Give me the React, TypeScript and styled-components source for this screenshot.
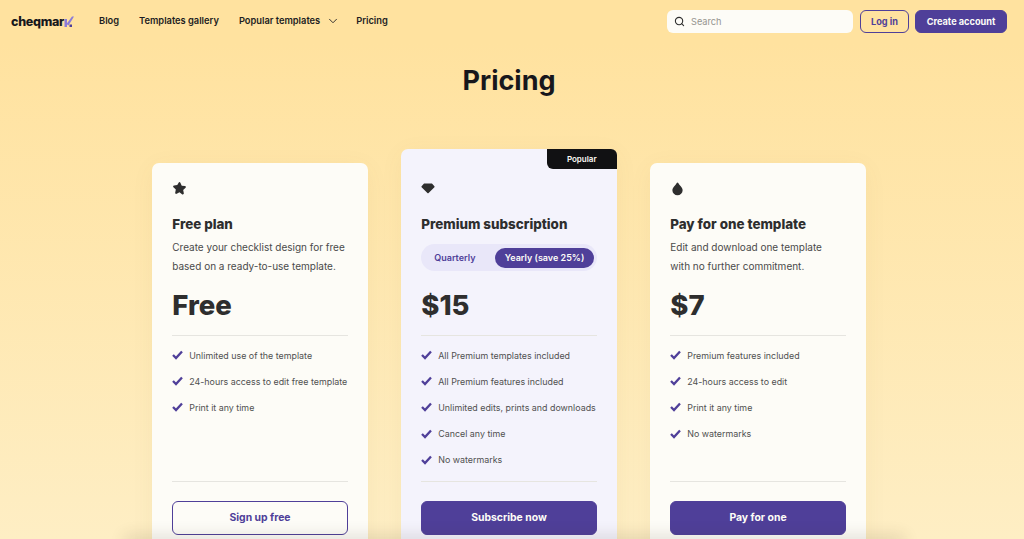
import React from "react";
import styled, { createGlobalStyle } from "styled-components";
import { ChevronDown, Search as SearchIcon } from "lucide-react";

const Global = createGlobalStyle`
  html, body {
    margin: 0;
    height: 539px;
    overflow: hidden;
  }
  body {
    font-family: "Inter", "Noto Sans", sans-serif;
    -webkit-font-smoothing: antialiased;
  }
  * { box-sizing: border-box; }
`;

const Page = styled.div`
  position: relative;
  height: 539px;
  overflow: hidden;
  background: linear-gradient(180deg, #ffe29f 0%, #ffe29f 8%, #feeec4 100%);
`;

const Nav = styled.header`
  display: flex;
  align-items: center;
  height: 43px;
  padding: 0 17px 0 11px;
`;

const Logo = styled.div`
  display: flex;
  align-items: center;
  width: 88px;
  font-size: 12.5px;
  font-weight: 800;
  letter-spacing: -0.3px;
  color: #17171c;
`;

const NavLinks = styled.nav`
  display: flex;
  align-items: center;
  gap: 20px;
  flex: 1;
  padding-bottom: 2px;
`;

const NavLink = styled.a`
  display: flex;
  align-items: center;
  gap: 6px;
  font-size: 9.3px;
  font-weight: 600;
  color: #1d1d22;
`;

const Caret = styled(ChevronDown)`
  margin-right: -4px;
`;

const SearchBox = styled.div`
  display: flex;
  align-items: center;
  gap: 6px;
  width: 186px;
  height: 23px;
  padding: 0 7px;
  margin-right: 7px;
  background: #fdfcf7;
  border-radius: 6px;
  font-size: 9.2px;
  color: #96958f;
`;

const NavButton = styled.button<{ $primary?: boolean }>`
  width: ${(p) => (p.$primary ? "92px" : "49px")};
  height: 23px;
  padding: 0;
  margin-left: ${(p) => (p.$primary ? "6px" : "0")};
  border: 1px solid #4f3f99;
  border-radius: 6px;
  background: ${(p) => (p.$primary ? "#4f3f99" : "transparent")};
  color: ${(p) => (p.$primary ? "#fdfcf7" : "#4f3f99")};
  font: 700 9.2px "Inter", sans-serif;
`;

const Title = styled.h1`
  margin: 19px 0 0 -6px;
  text-align: center;
  font-size: 27px;
  line-height: 38px;
  font-weight: 700;
  color: #17171c;
`;

const Cards = styled.main`
  display: flex;
  justify-content: center;
  align-items: flex-end;
  gap: 33.5px;
  margin: 49px 0 0 -6px;
`;

const Card = styled.section<{ $popular?: boolean }>`
  position: relative;
  display: flex;
  flex-direction: column;
  width: 215.5px;
  padding: ${(p) => (p.$popular ? "32px" : "18px")} 20px 24px;
  border-radius: 7px;
  background: ${(p) => (p.$popular ? "#f4f3fc" : "#fdfcf7")};
  box-shadow: 0 4px 24px rgba(120, 90, 40, 0.05);
`;

const Badge = styled.div`
  position: absolute;
  top: 0;
  right: 0;
  width: 70px;
  height: 20px;
  display: flex;
  align-items: center;
  justify-content: center;
  background: #111113;
  border-radius: 0 6px 0 6px;
  color: #fdfcf7;
  font-size: 8px;
  font-weight: 600;
`;

const IconSlot = styled.div`
  height: 16px;
  color: #2e2e2e;
  line-height: 0;
`;

const PlanName = styled.h2`
  margin: 18px 0 0;
  font-size: 13.4px;
  line-height: 18px;
  font-weight: 800;
  color: #2e2e2e;
`;

const Description = styled.p`
  margin: 5px 0 0;
  height: 38px;
  font-size: 10px;
  line-height: 19px;
  color: #4a4a4a;
`;

const Toggle = styled.div`
  display: flex;
  align-items: center;
  justify-content: space-between;
  height: 27px;
  margin-top: 11px;
  padding: 0 3px 0 13px;
  margin-bottom: 5px;
  background: #e9e7f9;
  border-radius: 14px;
  font-size: 9px;
  font-weight: 600;
  color: #4f3f99;
`;

const ToggleActive = styled.span`
  display: flex;
  align-items: center;
  height: 20px;
  padding: 0 9.5px;
  background: #4f3f99;
  border-radius: 10px;
  color: #fdfcf7;
`;

const Price = styled.div`
  margin-top: 9px;
  height: 40px;
  font-size: 27.5px;
  line-height: 40px;
  font-weight: 800;
  color: #2e2e2e;
`;

const Divider = styled.hr<{ $top?: number }>`
  width: 100%;
  height: 1px;
  margin: ${(p) => p.$top ?? 0}px 0 0;
  border: none;
  background: #e6e5e0;
`;

const Features = styled.ul`
  list-style: none;
  margin: 0;
  padding: 6px 0 0;
  height: 145px;
`;

const Feature = styled.li`
  display: flex;
  align-items: center;
  gap: 6px;
  height: 26.2px;
  font-size: 8.9px;
  color: #505050;
  white-space: nowrap;
`;

const CtaButton = styled.button<{ $outline?: boolean }>`
  width: 100%;
  height: 34px;
  margin-top: 19px;
  padding-bottom: 2px;
  border: 1px solid #4f3f99;
  border-radius: 6px;
  background: ${(p) => (p.$outline ? "transparent" : "#4f3f99")};
  color: ${(p) => (p.$outline ? "#4f3f99" : "#fdfcf7")};
  font: 700 10.4px "Inter", sans-serif;
`;

const BottomShade = styled.div`
  position: absolute;
  left: 125px;
  right: 120px;
  bottom: -12px;
  height: 12px;
  box-shadow: 0 -3px 16px rgba(60, 50, 30, 0.16);
  pointer-events: none;
`;

const StarGlyph = () => (
  <svg width="15" height="15" viewBox="0 0 24 24" fill="currentColor">
    <path d="M10.6 2.6c.6-1.300 2.200-1.300 2.800 0l2.200 4.800 5.200.7c1.400.2 1.900 1.900.9 2.800l-3.800 3.600 1 5.200c.3 1.400-1.200 2.400-2.400 1.700L12 17.900l-4.500 2.500c-1.200.7-2.700-.3-2.400-1.700l1-5.200-3.800-3.600c-1-.9-.5-2.600.9-2.800l5.200-.7z" />
  </svg>
);

const GemGlyph = () => (
  <svg width="14" height="16" viewBox="0 0 14 16" fill="currentColor">
    <path d="M3.500 2.500h7c.3 0 .5.100.7.300l2.200 2.500c.3.300.3.700 0 1l-5.800 5.800c-.3.300-.9.300-1.200 0L.6 6.300c-.3-.3-.3-.7 0-1l2.200-2.500c.2-.2.4-.3.7-.3z" />
  </svg>
);

const DropGlyph = () => (
  <svg width="15" height="16" viewBox="0 0 24 24" fill="currentColor">
    <path d="M12 1.500c.5 0 .9.300 1.200.7 1 2 2.500 3.600 4 5.300 1.700 2 3 3.900 3 6.500a8.200 8.200 0 0 1-16.400 0c0-2.600 1.300-4.500 3-6.500 1.500-1.700 3-3.300 4-5.300.3-.4.700-.7 1.200-.7z" />
  </svg>
);

const CheckGlyph = () => (
  <svg width="11" height="10" viewBox="0 0 11 10" fill="none" stroke="#4f3f99" strokeWidth="2.300">
    <path d="M1 5 4 8l6-6.500" />
  </svg>
);

const LogoMark = () => (
  <svg width="10" height="12" viewBox="0 0 10 12">
    <path d="M0.500 3h2.500v8H0.500z" fill="#8b7bd8" />
    <path d="M2.500 8 8 .5h2L4.500 9.500z" fill="#8b7bd8" />
    <path d="M5.500 8.500h2.500V11H5.500z" fill="#4f3f99" />
  </svg>
);

type Plan = {
  name: string;
  icon: React.ReactNode;
  description?: string[];
  price: string;
  features: string[];
  cta: string;
  outline?: boolean;
  popular?: boolean;
};

const plans: Plan[] = [
  {
    name: "Free plan",
    icon: <StarGlyph />,
    description: ["Create your checklist design for free", "based on a ready-to-use template."],
    price: "Free",
    features: ["Unlimited use of the template", "24-hours access to edit free template", "Print it any time"],
    cta: "Sign up free",
    outline: true,
  },
  {
    name: "Premium subscription",
    icon: <GemGlyph />,
    price: "$15",
    features: [
      "All Premium templates included",
      "All Premium features included",
      "Unlimited edits, prints and downloads",
      "Cancel any time",
      "No watermarks",
    ],
    cta: "Subscribe now",
    popular: true,
  },
  {
    name: "Pay for one template",
    icon: <DropGlyph />,
    description: ["Edit and download one template", "with no further commitment."],
    price: "$7",
    features: ["Premium features included", "24-hours access to edit", "Print it any time", "No watermarks"],
    cta: "Pay for one",
  },
];

export default function App() {
  return (
    <Page>
      <Global />
      <Nav>
        <Logo>
          cheqmar
          <LogoMark />
        </Logo>
        <NavLinks>
          <NavLink>Blog</NavLink>
          <NavLink>Templates gallery</NavLink>
          <NavLink>
            Popular templates
            <Caret size={14} strokeWidth={1.5} />
          </NavLink>
          <NavLink>Pricing</NavLink>
        </NavLinks>
        <SearchBox>
          <SearchIcon size={11} color="#2e2e2e" strokeWidth={2.4} />
          Search
        </SearchBox>
        <NavButton>Log in</NavButton>
        <NavButton $primary>Create account</NavButton>
      </Nav>
      <Title>Pricing</Title>
      <Cards>
        {plans.map((plan) => (
          <Card key={plan.name} $popular={plan.popular}>
            {plan.popular && <Badge>Popular</Badge>}
            <IconSlot>{plan.icon}</IconSlot>
            <PlanName>{plan.name}</PlanName>
            {plan.description ? (
              <Description>
                {plan.description[0]}
                <br />
                {plan.description[1]}
              </Description>
            ) : (
              <Toggle>
                Quarterly
                <ToggleActive>Yearly (save 25%)</ToggleActive>
              </Toggle>
            )}
            <Price>{plan.price}</Price>
            <Divider $top={10} />
            <Features>
              {plan.features.map((f) => (
                <Feature key={f}>
                  <CheckGlyph />
                  {f}
                </Feature>
              ))}
            </Features>
            <Divider />
            <CtaButton $outline={plan.outline}>{plan.cta}</CtaButton>
          </Card>
        ))}
      </Cards>
      <BottomShade />
    </Page>
  );
}
